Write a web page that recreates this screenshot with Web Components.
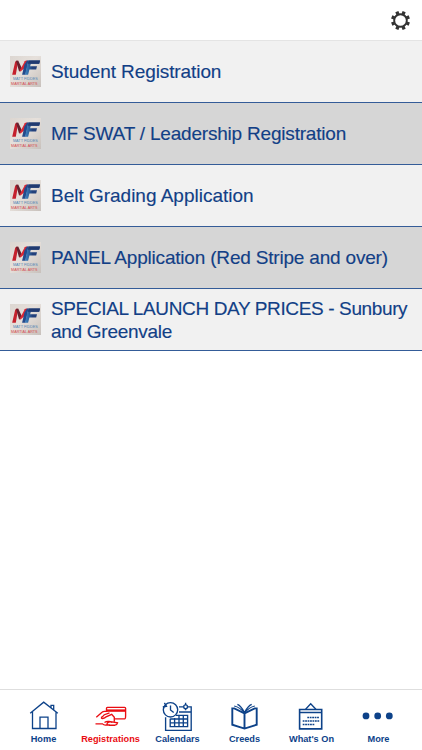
<!DOCTYPE html>
<html lang="en"><head><meta charset="utf-8"><title>Registrations</title>
<style>html,body{margin:0;height:100%;background:#fff}body{font-family:"Liberation Sans",Arial,sans-serif;color:#123f86}</style></head>
<body>
<mf-app>
<mf-header slot="header"></mf-header>
<mf-row style="letter-spacing:-.09px">Student Registration</mf-row>
<mf-row style="letter-spacing:-.2px">MF SWAT / Leadership Registration</mf-row>
<mf-row style="letter-spacing:-.01px">Belt Grading Application</mf-row>
<mf-row style="letter-spacing:-.19px">PANEL Application (Red Stripe and over)</mf-row>
<mf-row><span style="letter-spacing:-.37px">SPECIAL LAUNCH DAY PRICES - Sunbury</span> <span style="letter-spacing:-.28px">and Greenvale</span></mf-row>
<mf-tab slot="tabs" icon="home">Home</mf-tab>
<mf-tab slot="tabs" icon="card" active>Registrations</mf-tab>
<mf-tab slot="tabs" icon="calendar">Calendars</mf-tab>
<mf-tab slot="tabs" icon="book">Creeds</mf-tab>
<mf-tab slot="tabs" icon="board">What's On</mf-tab>
<mf-tab slot="tabs" icon="more">More</mf-tab>
</mf-app>
<script>
const define=(name,render)=>customElements.define(name,class extends HTMLElement{
  constructor(){super();this.attachShadow({mode:'open'})}
  connectedCallback(){this.shadowRoot.innerHTML=render(this)}
});
define('mf-app',()=>`<style>:host{display:flex;flex-direction:column;height:750px;background:#fff}
main{flex:1}nav{display:flex;box-sizing:border-box;height:61px;padding:0 10px;border-top:1px solid #dedede}</style>
<slot name="header"></slot><main><slot></slot></main><nav><slot name="tabs"></slot></nav>`);
define('mf-header',()=>`<style>:host{display:flex;box-sizing:border-box;height:41px;justify-content:flex-end;border-bottom:1px solid #e4e4e4;padding:10px 11px 0 0}svg{display:block}</style>
<svg width="21" height="21" viewBox="-10.5 -10.5 21 21" fill="none" stroke="#333"><circle r="6.3" stroke-width="1.9"/>
<g stroke-width="3.3">${[0,1,2,3,4,5,6,7].map(i=>`<path d="M0-6.4V-9.5" transform="rotate(${i*45+22.5})"/>`).join('')}</g></svg>`);
define('mf-logo',()=>`<style>:host{display:block;width:31px;height:31px;letter-spacing:0;line-height:normal}svg{display:block;overflow:visible}</style>
<svg width="31" height="31" viewBox="0 0 31 31"><defs><linearGradient id="g" x2="1" y2="1"><stop stop-color="#dcd6d1"/><stop offset=".45" stop-color="#e6e0db"/><stop offset="1" stop-color="#c8c1bc"/></linearGradient>
<linearGradient id="b" x2="1"><stop stop-color="#3d87c4"/><stop offset=".5" stop-color="#23417c"/></linearGradient></defs>
<rect width="31" height="31" fill="url(#g)"/>
<path d="M2.2 18.8 5 6.4Q5.3 4.7 6.6 4.7H8.2L5.8 18.8Z" fill="#c5202c"/><path d="M6 4.7H8.3L11.4 11.2 10.5 15.2 9 15.2Z" fill="#66222f"/><path d="M9.3 15.2 14.8 5.2Q15.4 4.4 16.4 4.4H17.5L16 11 10.8 15.2Z" fill="#dc2733"/>
<path d="M14.5 8.5 17 4.4H18.6L15.4 18.8H12.1Z" fill="#244a8b"/><path d="M18.5 4.4H30L29.2 7.8H20.8L20.1 10.3H27L26.2 13.4H19.4L18.1 18.8H15L17.2 9Z" fill="url(#b)"/>
<path d="M18.5 4.4H30L29.2 7.8H18Z" fill="#213a70"/>
<g font-family="Liberation Sans,sans-serif" font-size="4.2"><text x="2.9" y="24.2" textLength="25" lengthAdjust="spacingAndGlyphs" fill="#4e86b5">MATT FIDDES</text><text x="1.1" y="28.5" textLength="26.5" lengthAdjust="spacingAndGlyphs" fill="#d34a50" font-size="3.9">MARTIAL ARTS</text></g></svg>`);
define('mf-row',()=>`<style>:host{display:flex;align-items:center;box-sizing:border-box;height:62px;padding:0 10px 0 10.4px;gap:9.6px;background:#f1f1f1;border-bottom:1px solid #345c98;font-size:19px;line-height:23px}
:host(:nth-of-type(even)){background:#d6d6d6}mf-logo{flex:none}.t{flex:1;-webkit-text-stroke:.15px currentColor}</style><mf-logo></mf-logo><span class="t"><slot></slot></span>`);
const icons={
home:['28','<path d="M30.2 713.3 43.7 702.2 57.8 713.3M32.5 711.8V728.5H56V711.8M40 728.5V717.2H48V728.5M51 707.6V705.3H53.7V709.8" stroke-width="1.3"/>'],
card:['95','<path d="M106.5 711V708.2Q106.5 707.3 107.4 707.3H124.6Q125.6 707.3 125.6 708.2V715.7Q125.6 718.8 124.7 718.8H114.8"/><path d="M106.5 710.6H125.5" stroke-width="2.4"/><path d="M96.3 717.2 102.3 712.1Q103.2 711.3 104.4 711.3H107.5M109.5 712.8 104.4 714.7Q102.8 716.8 101.8 717Q100.8 718.5 102.6 718.5 105 718 106.1 716.8L111.7 714.3 114.3 717.3V721.5M95.5 723.9H102.5Q104 725.5 106.5 725H110M104.5 722.5Q106.5 721 109 721.4L117.5 722.8Q117 725 115 725.2H109Q106.5 725 107.3 723 110 721 112.3 722.5" stroke-width="1.35"/>'],
calendar:['162','<circle cx="170.5" cy="709.8" r="7.2"/><path d="M170.5 705.4V710L173.7 712.6M164.4 702.8 166.5 706.2 162.8 707M165.6 717.3V730.4H191.2V706.8H188M183.5 706.8H179M179 712H191"/><circle cx="185.6" cy="706.7" r="1.9"/><path d="M185.6 702.8V705M185.6 708.4V710.2M176 715.4H187.6V726.6H170.2V718.8M179 715.4V726.6M183.3 715.4V726.6M174.6 718V726.6M170.2 719H187.6M170.2 722.8H187.6"/>'],
book:['229','<path d="M244.5 713.3 234.3 708.4H232.3V724.7L244.5 728.6 256.7 724.7V708.4H254.7L244.5 713.3V728" stroke-width="1.9"/><path d="M244.5 712.5C242.5 708.5 240.5 705.5 237.4 704.3M244.5 713C242 709.8 239 707 234.2 706M244.5 712.5C246.5 708.5 248.5 705.5 251.7 704.3M244.5 713C247 709.8 250 707 254.8 706" stroke-width="1.25"/>'],
board:['296','<path d="M299.6 709.5H321.7V728.9H299.6Z" stroke-width="1.6"/><path d="M300 712.5H322" stroke-width="1.5"/><path d="M305.6 709.2 310.7 703.8 315.9 709.2"/><path d="M307.3 717.5H319.3M302.7 721H319.3M302.7 724.5H314.5" stroke-width="1.7" stroke-dasharray="1.8 .65"/>'],
more:['363','<g fill="currentColor" stroke="none"><circle cx="366" cy="715.9" r="3.4"/><circle cx="377.7" cy="715.9" r="3.4"/><circle cx="389.3" cy="715.9" r="3.4"/></g>']};
define('mf-tab',e=>{const [x,art]=icons[e.getAttribute('icon')];return `<style>:host{display:flex;flex:1 1 0;min-width:0;flex-direction:column;align-items:center;padding-top:10px;font-size:9.2px;font-weight:700;line-height:11px;white-space:nowrap;color:#0d4289}
:host([active]){color:#ea0d12}svg{display:block;overflow:visible;margin-bottom:2px}</style>
<svg width="32" height="32" viewBox="${x} 700 32 32" fill="none" stroke="currentColor" stroke-width="1.35">${art}</svg><span><slot></slot></span>`});
</script></body></html>
